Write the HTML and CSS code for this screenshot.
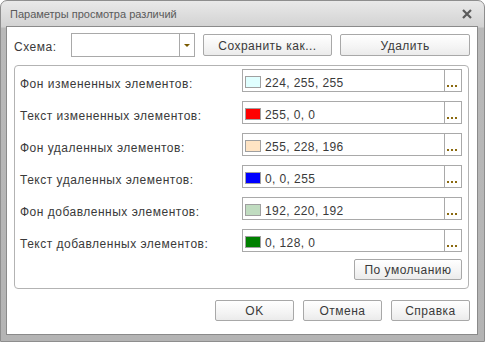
FILE: index.html
```html
<!DOCTYPE html>
<html>
<head>
    <meta charset="utf-8" />
    <title>Параметры просмотра различий</title>
    <link rel="stylesheet" href="styles.css">
</head>
<body>
    <div class="window">
        <div class="titlebar">
            <span class="title">Параметры просмотра различий</span>
            <svg class="close" width="12" height="12" viewBox="0 0 12 12">
                <path d="M2 2 L10 10 M10 2 L2 10" stroke="#5a5a5a" stroke-width="2.2" />
            </svg>
        </div>
        <div class="client">
            <div class="toprow">
                <span class="caption">Схема:</span>
                <div class="combo">
                    <div class="combo-text"></div>
                    <div class="combo-btn"><span class="arrow"></span></div>
                </div>
                <div class="btn save">Сохранить как...</div>
                <div class="btn del">Удалить</div>
            </div>

            <div class="group">
                <div class="row">
                    <span class="label">Фон измененных элементов:</span>
                    <div class="field">
                        <span class="swatch sw-changed-bg"></span>
                        <span class="value">224, 255, 255</span>
                        <span class="dots"></span>
                    </div>
                </div>
                <div class="row">
                    <span class="label">Текст измененных элементов:</span>
                    <div class="field">
                        <span class="swatch sw-changed-fg"></span>
                        <span class="value">255, 0, 0</span>
                        <span class="dots"></span>
                    </div>
                </div>
                <div class="row">
                    <span class="label">Фон удаленных элементов:</span>
                    <div class="field">
                        <span class="swatch sw-deleted-bg"></span>
                        <span class="value">255, 228, 196</span>
                        <span class="dots"></span>
                    </div>
                </div>
                <div class="row">
                    <span class="label">Текст удаленных элементов:</span>
                    <div class="field">
                        <span class="swatch sw-deleted-fg"></span>
                        <span class="value">0, 0, 255</span>
                        <span class="dots"></span>
                    </div>
                </div>
                <div class="row">
                    <span class="label">Фон добавленных элементов:</span>
                    <div class="field">
                        <span class="swatch sw-added-bg"></span>
                        <span class="value">192, 220, 192</span>
                        <span class="dots"></span>
                    </div>
                </div>
                <div class="row">
                    <span class="label">Текст добавленных элементов:</span>
                    <div class="field">
                        <span class="swatch sw-added-fg"></span>
                        <span class="value">0, 128, 0</span>
                        <span class="dots"></span>
                    </div>
                </div>
                <div class="defaults">
                    <div class="btn btn-default">По умолчанию</div>
                </div>
            </div>

            <div class="bottomrow">
                <div class="btn btn-dlg">OK</div>
                <div class="btn btn-dlg">Отмена</div>
                <div class="btn btn-dlg">Справка</div>
            </div>
        </div>
    </div>
</body>
</html>
```

FILE: styles.css
```css
html, body {
    margin: 0;
    padding: 0;
    background: #ffffff;
}

body {
    font-family: "Liberation Sans", Arial, sans-serif;
    font-size: 12px;
    color: #3a3a3a;
}

.window {
    box-sizing: border-box;
    width: 485px;
    height: 342px;
    display: flex;
    flex-direction: column;
    padding: 0 6px 6px 5px;
    border: 1px solid #8e8e8e;
    border-radius: 7px 7px 0 0;
    background: linear-gradient(#e9e9e9 0, #d2d2d2 26px, #b9b9b9 27px, #b4b4b4 100%);
}

.titlebar {
    height: 25px;
    display: flex;
    align-items: center;
    justify-content: space-between;
    padding: 0 5px 0 4px;
}

.title {
    color: #5a5a5a;
    font-family: "Liberation Sans Narrow", "Liberation Sans", Arial, sans-serif;
    font-size: 11px;
    padding-top: 1px;
}

.close {
    display: block;
}

.client {
    flex: 1;
    display: flex;
    flex-direction: column;
    background: #fff;
    border: 1px solid #8a8a8a;
    padding: 0 7px 0 7px;
}

.toprow {
    display: flex;
    align-items: center;
    height: 24px;
    margin-top: 6px;
}

.caption {
    width: 57px;
    letter-spacing: 0.5px;
    padding-top: 3px;
}

.combo {
    box-sizing: border-box;
    width: 124px;
    height: 24px;
    border: 1px solid #a9a9a9;
    display: flex;
}

.combo-text {
    flex: 1;
}

.combo-btn {
    width: 14px;
    border-left: 1px solid #a9a9a9;
    display: flex;
    align-items: center;
    justify-content: center;
}

.arrow {
    width: 0;
    height: 0;
    margin-top: 1px;
    border-left: 3px solid transparent;
    border-right: 3px solid transparent;
    border-top: 3px solid #7a5a00;
}

.btn {
    box-sizing: border-box;
    height: 22px;
    border: 1px solid #a8a8a8;
    border-radius: 2px;
    background: linear-gradient(#ffffff, #f4f4f4 60%, #ebebeb);
    display: flex;
    align-items: center;
    justify-content: center;
    letter-spacing: 0.5px;
    padding-top: 1px;
}

.save {
    width: 130px;
    margin-left: 8px;
}

.del {
    width: 130px;
    margin-left: 8px;
}

.group {
    box-sizing: border-box;
    height: 224px;
    margin: 8px 1px 0 0;
    border: 1px solid #b3b3b3;
    border-radius: 4px;
    padding: 3px 6px 0 5px;
    display: flex;
    flex-direction: column;
    gap: 9px;
}

.row {
    display: flex;
    align-items: center;
    height: 23px;
}

.label {
    flex: 1;
    letter-spacing: 0.5px;
    padding-top: 7px;
}

.field {
    box-sizing: border-box;
    width: 220px;
    height: 23px;
    border: 1px solid #a9a9a9;
    display: flex;
    align-items: center;
}

.swatch {
    box-sizing: border-box;
    width: 16px;
    height: 12px;
    margin: 2px 4px 0 2px;
    border: 1px solid #a0a0a0;
}

.sw-changed-bg { background: #e0ffff; }
.sw-changed-fg { background: #ff0000; }
.sw-deleted-bg { background: #ffe4c4; }
.sw-deleted-fg { background: #0000ff; }
.sw-added-bg { background: #c0dcc0; }
.sw-added-fg { background: #008000; }

.value {
    flex: 1;
    padding-top: 5px;
    letter-spacing: 0.4px;
}

.dots {
    box-sizing: border-box;
    align-self: stretch;
    width: 17px;
    border-left: 1px solid #a9a9a9;
    display: flex;
    align-items: flex-end;
    padding: 0 0 4px 2px;
}

.dots::before {
    content: "";
    width: 2px;
    height: 2px;
    background: #8b6a10;
    box-shadow: 4px 0 #8b6a10, 8px 0 #8b6a10;
}

.defaults {
    display: flex;
    justify-content: flex-end;
    margin-top: -2px;
}

.btn-default {
    width: 108px;
    height: 21px;
}

.bottomrow {
    display: flex;
    justify-content: flex-end;
    gap: 9px;
    margin-top: 11px;
}

.btn-dlg {
    width: 79px;
    height: 21px;
}
```
